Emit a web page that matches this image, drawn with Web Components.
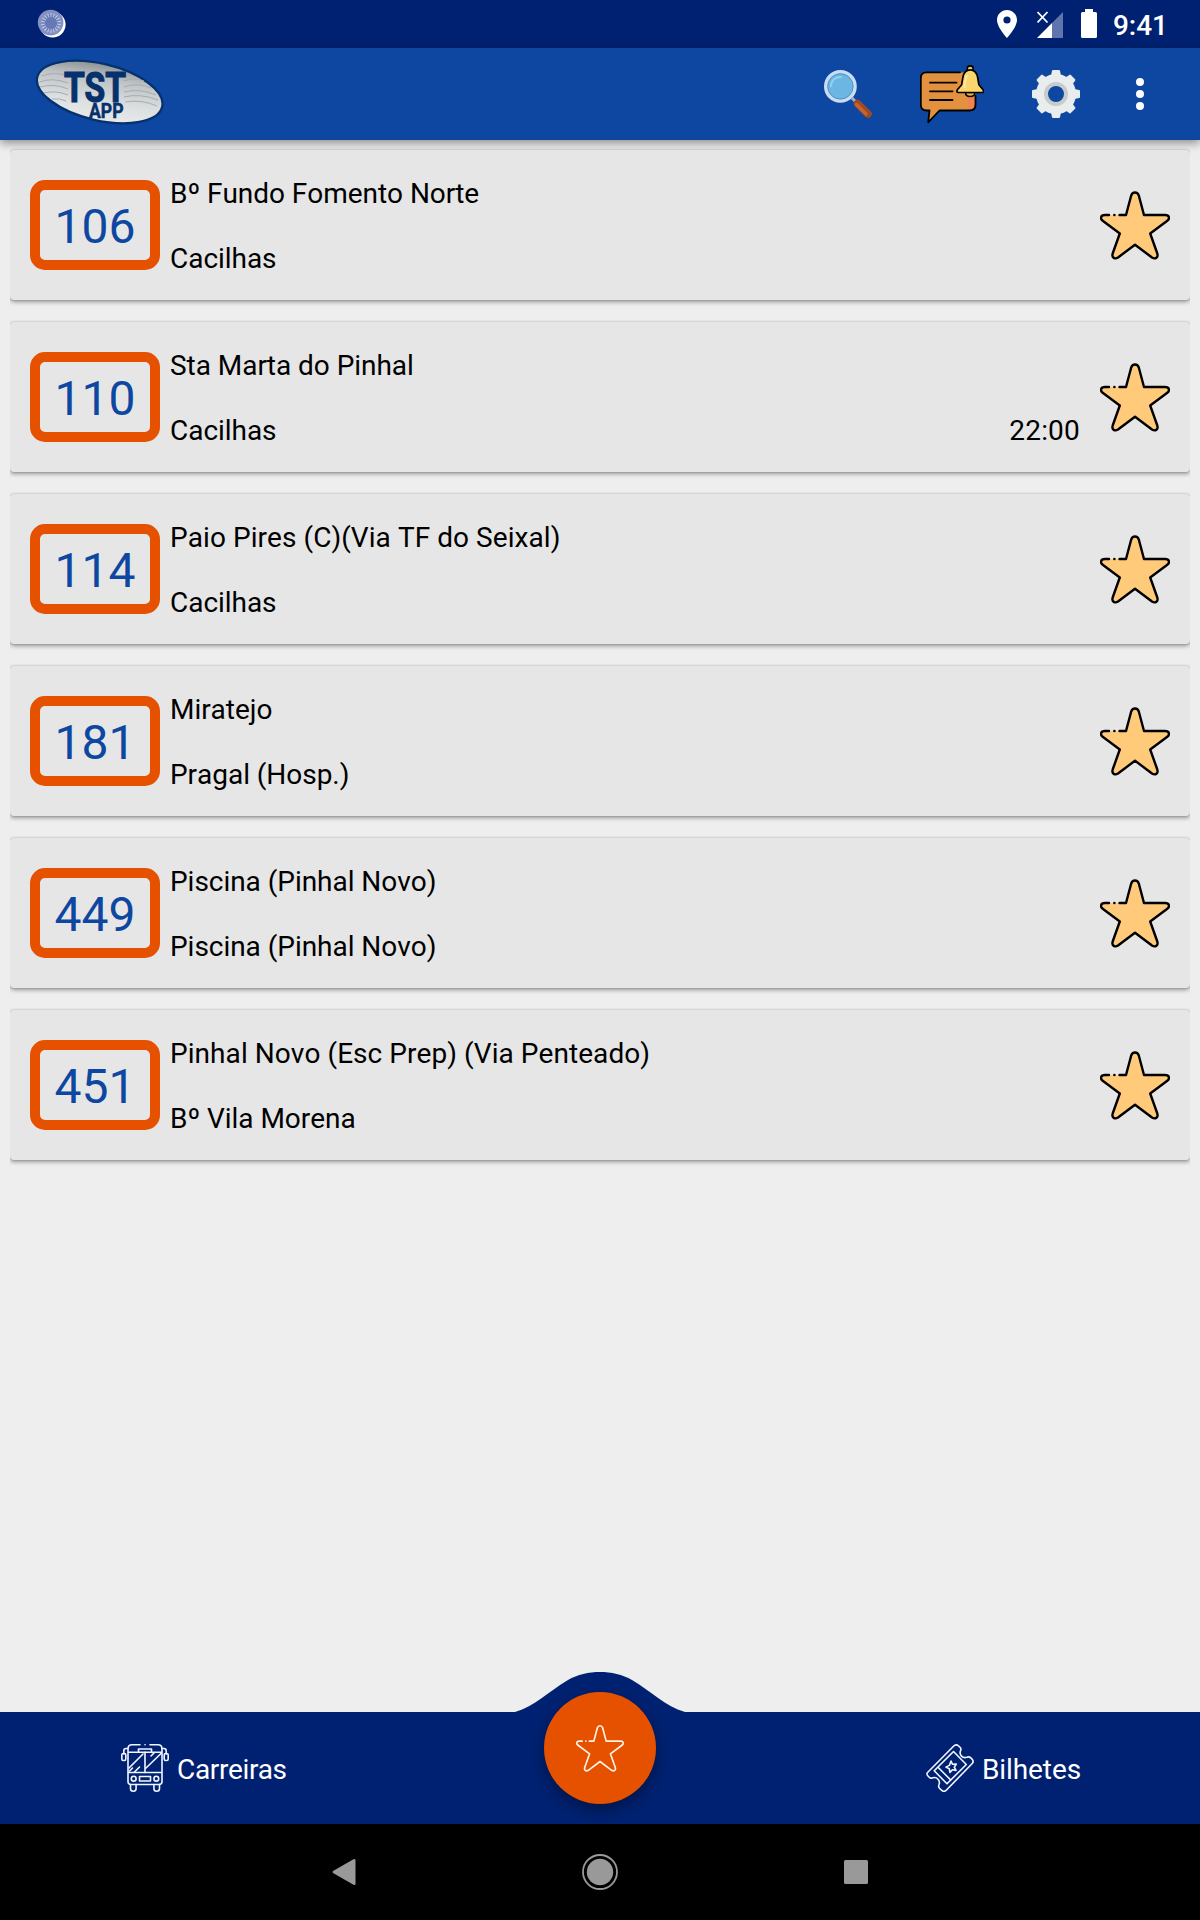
<!DOCTYPE html>
<html lang="pt">
<head>
<meta charset="utf-8">
<title>TST App</title>
<style>
  body {
    margin: 0;
    background: #eeeeee;
    font-family: Roboto, "Liberation Sans", sans-serif;
    font-size: 28px;
  }
</style>
</head>
<body>
<tst-app></tst-app>

<script>
// outline of the favourite star, shared by the cards and the round button
const starFill = 'M35 2.5C33 2.5 31.8 3.6 31.2 5.5L26 25H5C.5 25-.2 28.7 3 31L19.8 43.5 12.7 63.5C11.5 67.3 14.5 69.7 18 67.5L35 54.7 52 67.5C55.5 69.7 58.5 67.3 57.3 63.5L50.2 43.5 67 31C70.2 28.7 69.5 25 65 25H44L38.8 5.5C38.2 3.6 37 2.5 35 2.5Z';
const starLine = 'M9 25H5C.5 25-.2 28.7 3 31L19.8 43.5 12.7 63.5C11.5 67.3 14.5 69.7 18 67.5L35 54.7 52 67.5C55.5 69.7 58.5 67.3 57.3 63.5L50.2 43.5 67 31C70.2 28.7 69.5 25 65 25H44L38.8 5.5C38.2 3.6 37 2.5 35 2.5C33 2.5 31.8 3.6 31.2 5.5L26 25H19.5M14.3 25h.2';

class StarIcon extends HTMLElement {
    constructor() {
        super();
        this.attachShadow({ mode: 'open' });
    }
    connectedCallback() {
        this.shadowRoot.innerHTML = `
            <style>
              :host { display: block; flex: none; width: 70px; height: 70px; }
              svg { display: block; width: 100%; height: 100%; }
              .fill { fill: var(--star-fill, none); }
              .line { fill: none; stroke: var(--star-line, #000); stroke-width: 2.4; stroke-linecap: round; stroke-linejoin: round; }
            </style>
            <svg viewBox="0 0 70 70">
              <path class="fill" d="${starFill}"/>
              <path class="line" d="${starLine}"/>
            </svg>
        `;
    }
}

class StatusBar extends HTMLElement {
    constructor() {
        super();
        this.attachShadow({ mode: 'open' });
    }
    connectedCallback() {
        let rays = '';
        for (let i = 0; i < 18; i++) {
            rays += `<path d="M14 4v4" transform="rotate(${i * 20} 14 14)"/>`;
        }
        this.shadowRoot.innerHTML = `
            <style>
              :host {
                display: flex;
                box-sizing: border-box;
                height: 48px;
                padding: 9px 32px 0 37px;
                background: #002171;
                color: #fff;
              }
              svg { display: block; flex: none; }
              .pin { margin-left: auto; }
              .signal { margin-left: 20px; }
              .battery { margin-left: 18px; }
              .time { margin-left: 16px; font-weight: 500; line-height: 33px; }
            </style>
            <svg width="30" height="30" viewBox="0 0 30 30">
              <circle cx="15.6" cy="15.6" r="13" fill="#fff"/>
              <circle cx="13.6" cy="13.6" r="12.8" fill="#8290c2"/>
              <circle cx="13.800" cy="13.800" r="8" fill="#6779b4"/>
              <g stroke="#dce3f4" stroke-width="1" opacity=".75">${rays}</g>
            </svg>
            <svg class="pin" width="20" height="30" viewBox="0 0 20 30">
              <path fill="#fff" fill-rule="evenodd" d="M10 1C4.500 1 0 5.400 0 11c0 7.300 10 18 10 18s10-10.700 10-18C20 5.400 15.500 1 10 1Zm0 6.400a3.600 3.600 0 1 1 0 7.200 3.600 3.600 0 0 1 0-7.200Z"/>
            </svg>
            <svg class="signal" width="26" height="30" viewBox="0 0 26 30">
              <path fill="#6075ab" d="M26 3v26H15V14Z"/>
              <path fill="#fff" d="M15 14v15H0Z"/>
              <path stroke="#fff" stroke-width="1.800" d="m.5 3 10 10.500M10.500 3 .5 13.500"/>
            </svg>
            <svg class="battery" width="16" height="30" viewBox="0 0 16 30">
              <path fill="#fff" d="M4 0h8v3h2.500Q16 3 16 4.500v23q0 1.500-1.500 1.500h-13Q0 29 0 27.500v-23Q0 3 1.500 3H4Z"/>
            </svg>
            <div class="time">9:41</div>
        `;
    }
}

class AppBar extends HTMLElement {
    constructor() {
        super();
        this.attachShadow({ mode: 'open' });
    }
    connectedCallback() {
        let teeth = '';
        for (let i = 0; i < 8; i++) {
            teeth += `<path d="M19 6 20 .8Q20.200 0 21 0h6q.8 0 1 .8L29 6Z" transform="rotate(${i * 45} 24 24)"/>`;
        }
        this.shadowRoot.innerHTML = `
            <style>
              :host {
                display: flex;
                align-items: center;
                box-sizing: border-box;
                height: 92px;
                padding: 0 56px 0 34px;
                background: #0d47a1;
                box-shadow: 0 3px 9px rgba(0, 0, 0, .42);
                position: relative;
              }
              svg { display: block; flex: none; }
              .logo { margin-bottom: 4px; }
              .search { margin-left: auto; }
              .news { margin: 2px 0 0 48px; }
              .gear { margin-left: 48px; }
              .more { margin-left: 56px; }
            </style>
            <svg class="logo" width="132" height="68" viewBox="34 58 132 68">
              <defs>
                <linearGradient id="metal" x1="0" y1="0" x2="0.2" y2="1">
                  <stop offset="0" stop-color="#7d8285"/>
                  <stop offset=".35" stop-color="#bfc3c5"/>
                  <stop offset=".75" stop-color="#dcdfe0"/>
                  <stop offset="1" stop-color="#e6e8e8"/>
                </linearGradient>
              </defs>
              <ellipse cx="99.700" cy="92" rx="64.200" ry="28.300" transform="rotate(13.300 99.700 92)" fill="url(#metal)" stroke="#05316c" stroke-width="2.300"/>
              <g fill="none" stroke="#a3adb2" stroke-width="1">
                <path d="M42 76q12-5 26 0M40 82q12-5 28 1M40 87q14-4 28 2M44 93q12-3 24 2M52 99q8-1 14 2"/>
                <path d="M124 81q10-4 20 0M124 87q14-5 27 1M124 92q16-4 32 3M124 97q16-4 34 3M125 102q16-3 32 4"/>
              </g>
              <text fill="#05316c" stroke="#05316c" stroke-width="1.200" font-family="Roboto, sans-serif" font-weight="700">
                <tspan x="64" y="101.500" font-size="42.500" textLength="62" lengthAdjust="spacingAndGlyphs">TST</tspan><tspan x="89" y="117.500" font-size="20" stroke-width=".5" textLength="34.500" lengthAdjust="spacingAndGlyphs">APP</tspan>
              </text>
            </svg>
            <svg class="search" width="48" height="48" viewBox="0 0 48 48">
              <path d="m28 28 6 6" stroke="#9ab4cb" stroke-width="3"/>
              <path d="m33.500 33.500 10.500 10.500" stroke="#a04a24" stroke-width="7.500" stroke-linecap="round"/>
              <path d="m32.500 34.500 9.500 9.500" stroke="#c4652f" stroke-width="3.500" stroke-linecap="round"/>
              <circle cx="16.400" cy="16.400" r="14.600" fill="#6bb6e2" stroke="#c9dcf2" stroke-width="3.600"/>
              <circle cx="16.400" cy="16.400" r="12.700" fill="none" stroke="#4c95c6" stroke-width="1"/>
              <path d="M7 16q1-9 10-9" fill="none" stroke="#94cfee" stroke-width="2" stroke-linecap="round"/>
            </svg>
            <svg class="news" width="64" height="60" viewBox="0 0 64 60">
              <path d="M6.500 7.500h43q6 0 6 6v26q0 6-6 6H19.500L8.200 57.300 9.500 45.500h-3q-5.700 0-5.700-6v-26q0-6 5.700-6Z" fill="#e3913f"/>
              <path d="M48 31h7.500v9q0 5.500-6 5.500H48Z" fill="#ee8350"/>
              <path d="M40 7.300H6.500q-5.700 0-5.700 6v26q0 6.200 5.700 6.200h3L8.200 57.300 19.500 45.500h30q6 0 6-6V31" fill="none" stroke="#000" stroke-width="1.800" stroke-linecap="round" stroke-linejoin="round"/>
              <path d="M10 17.700h26.500M10 26.300h22.500M10 35h22.500" stroke="#000" stroke-width="1.800" stroke-linecap="round"/>
              <path d="M45.500 27.500q0 4 4.700 4t4.700-4Z" fill="#eab44e" stroke="#000" stroke-width="1.600"/>
              <path d="M47.300 5.500V3.300q0-2.400 2.900-2.400t2.900 2.400v2.200" fill="#f6c85f" stroke="#000" stroke-width="1.600"/>
              <path d="M50.200 4.800q-6 0-7.300 7.500l-1.300 7.500-4.200 5q-1.400 2.700 1 2.700h23.800q2.300 0 .9-2.700l-4.200-5-1.300-7.500q-1.400-7.500-7.400-7.500Z" fill="#fbd56d" stroke="#000" stroke-width="1.700" stroke-linejoin="round"/>
              <path d="M47 10q-2.500 6-2.500 13" fill="none" stroke="#ffe69b" stroke-width="2"/>
            </svg>
            <svg class="gear" width="48" height="48" viewBox="0 0 48 48">
              <g fill="#e9eded">${teeth}</g>
              <circle cx="24" cy="24" r="14.500" fill="none" stroke="#e9eded" stroke-width="11"/>
              <circle cx="24" cy="24" r="10" fill="none" stroke="#c8cbcb" stroke-width="4"/>
            </svg>
            <svg class="more" width="8" height="32" viewBox="0 0 8 32" fill="#fff">
              <circle cx="4" cy="4" r="4"/><circle cx="4" cy="16" r="4"/><circle cx="4" cy="28" r="4"/>
            </svg>
        `;
    }
}

class RouteCard extends HTMLElement {
    constructor() {
        super();
        this.attachShadow({ mode: 'open' });
    }
    connectedCallback() {
        this.shadowRoot.innerHTML = `
            <style>
              :host {
                display: flex;
                align-items: center;
                box-sizing: border-box;
                height: 150px;
                padding: 0 20px;
                border-radius: 4px;
                background: #e6e6e6;
                box-shadow: 0 2px 4px rgba(0, 0, 0, .36), 0 0 2px rgba(0, 0, 0, .24);
                clip-path: inset(-4px 0 -8px 0);
                color: #000;
              }
              .number {
                flex: none;
                box-sizing: border-box;
                width: 130px;
                height: 90px;
                border: 10px solid #e65100;
                border-radius: 15px;
                color: #0d47a1;
                font-size: 48px;
                line-height: 74px;
                text-align: center;
              }
              .stops {
                flex: 1;
                margin: 2px 0 0 10px;
                line-height: 33px;
                font-kerning: none;
                letter-spacing: -.04px;
              }
              .last {
                display: flex;
                justify-content: space-between;
                margin-top: 32px;
              }
              star-icon {
                margin-left: 20px;
                --star-fill: #ffca7a;
              }
            </style>
            <div class="number">${this.getAttribute('number')}</div>
            <div class="stops">
              <div><slot name="from"></slot></div>
              <div class="last"><slot name="to"></slot><slot name="time"></slot></div>
            </div>
            <star-icon></star-icon>
        `;
    }
}

class NavItem extends HTMLElement {
    constructor() {
        super();
        this.attachShadow({ mode: 'open' });
    }
    connectedCallback() {
        const icons = {
            bus: `
              <path d="M19 .8H11Q7 .8 7 5v32.500q0 3 3 3h28q3 0 3-3V5q0-4.200-4-4.200h-8M24 .8h.1M7 8.300h34M7 28.500h34"/>
              <path d="M7 4.500H5Q2.800 4.500 2.800 7v3M41 4.500h2q2.200 0 2.200 2.500v3"/>
              <rect x=".8" y="9.500" width="4" height="7" rx="1.500"/>
              <rect x="43.200" y="9.500" width="4" height="7" rx="1.500"/>
              <path d="M17.500 8V5h13v3M24 8.300v20.200"/>
              <path d="M8 24 22 10M13.500 28l5-5M8.500 27l3-3M25 24 40 9.500M30 12l3-3"/>
              <circle cx="12.700" cy="34.700" r="2.400"/><circle cx="35.300" cy="34.700" r="2.400"/>
              <rect x="18.500" y="32.500" width="11" height="4.500"/>
              <path d="M9.500 40.500v4q0 2.700 2.800 2.700t2.800-2.700v-4M32.900 40.500v4q0 2.700 2.800 2.700t2.800-2.700v-4"/>`,
            ticket: `
              <path d="M1.800 28.200 27.500 2.200q2.500-2.500 5.200-.2l1.500 1.500q1.300 1.400.3 3.300-1.200 3 1 5.300t5.300 1.200q2.300-1 4 .6l1.200 1.200q2.300 2.300 0 4.600L20.500 46q-2.500 2.500-5 .2l-2-2q-1.500-1.500-.5-3.700 1.200-3-1-5.300t-5-1.400q-2.200 1-3.800-.6l-1.200-1.200q-2-2-.2-3.800Z"/>
              <path d="M27.500 7.500 40.300 20.500 21 39.800 8.200 26.800ZM12 23.200l12.800 12.900"/>
              <path d="m25 17 1.500 3.300 3.800-.3-2 3.100 1.700 3.300-3.600-.6-2.500 2.600-.6-3.700-3.400-1.600 3.500-1.700Z"/>`
        };
        this.shadowRoot.innerHTML = `
            <style>
              :host { display: flex; align-items: center; gap: 8px; color: #fff; line-height: 33px; }
              svg { display: block; flex: none; fill: none; stroke: #f0f6ff; stroke-width: 1.600; stroke-linecap: round; stroke-linejoin: round; }
              .label { margin-top: 2px; letter-spacing: var(--label-spacing, 0); }
            </style>
            <svg width="48" height="48" viewBox="0 0 48 48">${icons[this.getAttribute('icon')]}</svg>
            <div class="label"><slot></slot></div>
        `;
    }
}

class BottomNav extends HTMLElement {
    constructor() {
        super();
        this.attachShadow({ mode: 'open' });
    }
    connectedCallback() {
        this.shadowRoot.innerHTML = `
            <style>
              :host {
                display: flex;
                justify-content: space-between;
                box-sizing: border-box;
                height: 112px;
                padding: 0 119px 0 121px;
                position: relative;
                background: #002171;
              }
              /* hump that rises over the bar behind the round button */
              .hump {
                position: absolute;
                left: 50%;
                top: -40px;
                margin-left: -85px;
              }
              .fab {
                position: absolute;
                left: 50%;
                top: -20px;
                margin-left: -56px;
                width: 112px;
                height: 112px;
                border-radius: 50%;
                display: grid;
                place-items: center;
                background: #e65100;
                box-shadow: 0 6px 14px rgba(0, 0, 0, .36);
              }
              .fab star-icon { width: 48px; height: 48px; --star-line: #fff3e6; }
            </style>
            <slot></slot>
            <svg class="hump" width="170" height="41" viewBox="0 0 170 41">
              <path fill="#002171" d="M0 40C20 34 33 20 53 8 72-2.600 98-2.600 117 8 137 20 150 34 170 40v1H0Z"/>
            </svg>
            <div class="fab"><star-icon></star-icon></div>
        `;
    }
}

class SystemKeys extends HTMLElement {
    constructor() {
        super();
        this.attachShadow({ mode: 'open' });
    }
    connectedCallback() {
        this.shadowRoot.innerHTML = `
            <style>
              :host {
                display: flex;
                align-items: center;
                justify-content: space-between;
                box-sizing: border-box;
                height: 96px;
                padding: 0 326px;
                background: #000;
              }
              svg { display: block; fill: #999; }
            </style>
            <svg width="36" height="36" viewBox="0 0 36 36"><path d="M7 17 27.500 5.200Q29.500 4.200 29.500 6.500v23q0 2.300-2 1.300L7 19q-1-1 0-2Z"/></svg>
            <svg width="36" height="36" viewBox="0 0 36 36"><circle cx="18" cy="18" r="13.200"/><circle cx="18" cy="18" r="17" fill="none" stroke="#999" stroke-width="1.800"/></svg>
            <svg width="36" height="36" viewBox="0 0 36 36"><rect x="6" y="6" width="24" height="24" rx="1.500"/></svg>
        `;
    }
}

class TstApp extends HTMLElement {
    constructor() {
        super();
        this.attachShadow({ mode: 'open' });
        this.routes = [
            { number: 106, from: 'Bº Fundo Fomento Norte', to: 'Cacilhas' },
            { number: 110, from: 'Sta Marta do Pinhal', to: 'Cacilhas', time: '22:00' },
            { number: 114, from: 'Paio Pires (C)(Via TF do Seixal)', to: 'Cacilhas' },
            { number: 181, from: 'Miratejo', to: 'Pragal (Hosp.)' },
            { number: 449, from: 'Piscina (Pinhal Novo)', to: 'Piscina (Pinhal Novo)' },
            { number: 451, from: 'Pinhal Novo (Esc Prep) (Via Penteado)', to: 'Bº Vila Morena' }
        ];
    }
    connectedCallback() {
        this.render();
    }
    render() {
        this.shadowRoot.innerHTML = `
            <style>
              :host { display: flex; flex-direction: column; height: 1920px; }
              main {
                flex: 1;
                display: flex;
                flex-direction: column;
                gap: 22px;
                padding: 10px;
              }
              .long { letter-spacing: .06px; }
              [slot="time"] { letter-spacing: .2px; }
              nav-item[icon="bus"] { --label-spacing: -.3px; }
              nav-item[icon="ticket"] { --label-spacing: -.1px; }
            </style>
            <status-bar></status-bar>
            <app-bar></app-bar>
            <main>
              ${this.routes.map(r => `
              <route-card number="${r.number}">
                <span slot="from" class="${r.from.length > 30 ? 'long' : ''}">${r.from}</span>
                <span slot="to">${r.to}</span>
                ${r.time ? `<span slot="time">${r.time}</span>` : ''}
              </route-card>`).join('')}
            </main>
            <bottom-nav>
              <nav-item icon="bus">Carreiras</nav-item>
              <nav-item icon="ticket">Bilhetes</nav-item>
            </bottom-nav>
            <system-keys></system-keys>
        `;
    }
}

function registrationCustomElements() {
    window.customElements.define('star-icon', StarIcon);
    window.customElements.define('status-bar', StatusBar);
    window.customElements.define('app-bar', AppBar);
    window.customElements.define('route-card', RouteCard);
    window.customElements.define('nav-item', NavItem);
    window.customElements.define('bottom-nav', BottomNav);
    window.customElements.define('system-keys', SystemKeys);
    window.customElements.define('tst-app', TstApp);
}

registrationCustomElements();
</script>
</body>
</html>
